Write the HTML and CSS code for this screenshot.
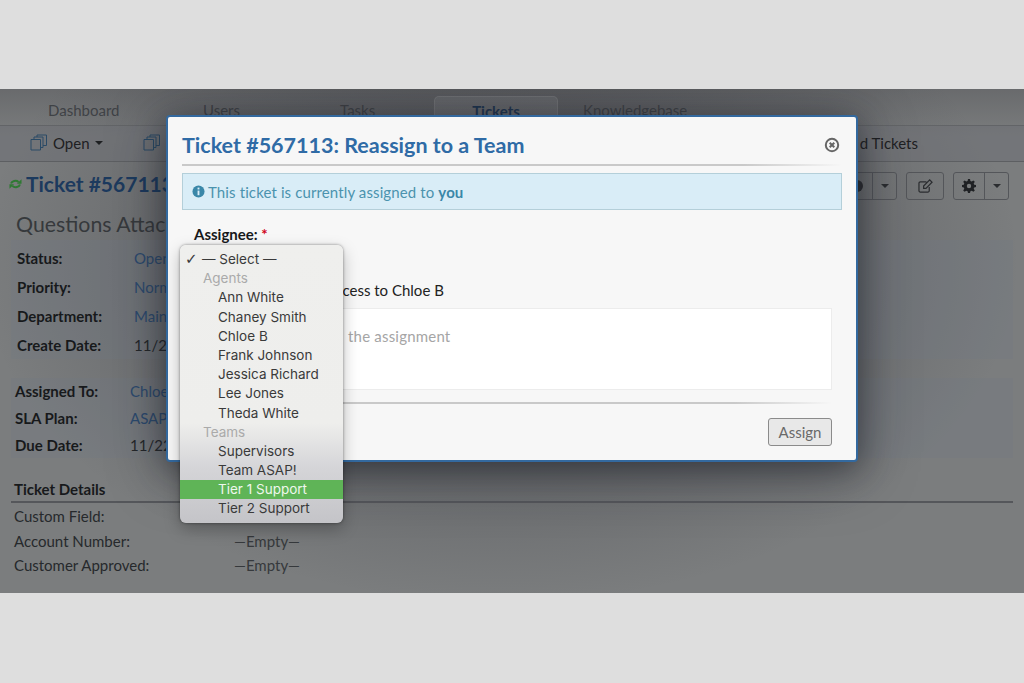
FILE: index.html
```html
<!DOCTYPE html>
<html lang="en">
<head>
<meta charset="utf-8">
<title>Ticket #567113</title>
<link rel="stylesheet" href="styles.css">
</head>
<body>
<main class="frame">
  <nav class="tabs">
    <span class="tab t-dash">Dashboard</span>
    <span class="tab t-users">Users</span>
    <span class="tab t-tasks">Tasks</span>
    <span class="tab t-tickets">Tickets</span>
    <span class="tab t-kb">Knowledgebase</span>
  </nav>
  <div class="subnav">
    <span class="sub-open">
      <svg class="files" viewBox="0 0 18 17"><path d="M1 5.500h9.500v10.500H1zM4 5.500V3h9v10.500h-2.500M7 3V1h9.500v10.500H13"/></svg>
      Open <i class="caret"></i>
    </span>
    <svg class="files files-2" viewBox="0 0 18 17"><path d="M1 5.500h9.500v10.500H1zM4 5.500V3h9v10.500h-2.500M7 3V1h9.500v10.500H13"/></svg>
    <span class="sub-right">d Tickets</span>
  </div>
  <div class="content">
    <div class="title-row">
      <h1 class="ticket-title">
        <svg class="refresh" viewBox="0 0 14 12"><path class="arc" d="M2.200 5.500C3 2.800 7.500 1.500 10.300 3.800M11.800 6.500C11 9.200 6.500 10.500 3.700 8.200"/><path class="head" d="M13.500 .8V5.800H8.500zM.5 11.200V6.200H5.500z"/></svg>
        Ticket #567113
      </h1>
      <div class="actions">
        <span class="btn-group"><span class="btn-cell cell-clip"><svg class="i-print" viewBox="0 0 14 14"><circle cx="7" cy="7" r="6"/></svg></span><span class="btn-cell"><i class="caret"></i></span></span>
        <span class="btn-group"><span class="btn-cell cell-wide"><svg class="i-edit" viewBox="0 0 16 15"><path d="M12 8.500V12.500a1.500 1.500 0 0 1-1.500 1.500H2.500A1.500 1.500 0 0 1 1 12.500v-8A1.500 1.500 0 0 1 2.500 3H9M6 7.500 12.500 1 15 3.500 8.500 10H6z"/></svg></span></span>
        <span class="btn-group"><span class="btn-cell cell-gear"><svg class="i-gear" viewBox="0 0 14 14"><path fill-rule="evenodd" d="M6 0h2l.4 2 1.300.5L11.400 1.400 12.800 2.800 11.700 4.400 12.200 5.700 14 6v2l-1.800.4-.5 1.300 1.100 1.700-1.400 1.400-1.700-1.100-1.300.5L8 14H6l-.4-1.800-1.300-.5-1.700 1.100-1.400-1.400 1.100-1.700-.5-1.300L0 8V6l1.800-.3.5-1.300L1.200 2.800 2.600 1.400 4.300 2.500 5.600 2zM7 4.800a2.200 2.200 0 1 0 0 4.400 2.200 2.200 0 0 0 0-4.400z"/></svg></span><span class="btn-cell"><i class="caret"></i></span></span>
      </div>
    </div>
    <h2 class="subject">Questions Attached</h2>
    <dl class="info info-a">
      <dt>Status:</dt><dd class="link">Open</dd>
      <dt>Priority:</dt><dd class="link">Normal</dd>
      <dt>Department:</dt><dd class="link">Maintenance</dd>
      <dt>Create Date:</dt><dd>11/21/19</dd>
    </dl>
    <dl class="info info-b">
      <dt>Assigned To:</dt><dd class="link">Chloe B</dd>
      <dt>SLA Plan:</dt><dd class="link">ASAP</dd>
      <dt>Due Date:</dt><dd>11/22/19</dd>
    </dl>
    <h3 class="details-head">Ticket Details</h3>
    <dl class="details">
      <dt>Custom Field:</dt><dd></dd>
      <dt>Account Number:</dt><dd>&mdash;Empty&mdash;</dd>
      <dt>Customer Approved:</dt><dd>&mdash;Empty&mdash;</dd>
    </dl>
  </div>

  <section class="modal">
    <header class="modal-head">
      <h2>Ticket #567113: Reassign to a Team</h2>
      <svg class="close" viewBox="0 0 16 16"><circle cx="8" cy="8" r="6.200"/><path d="M5.700 5.700l4.600 4.600M10.300 5.700l-4.600 4.600"/></svg>
    </header>
    <hr class="rule">
    <p class="notice">
      <svg class="info-icon" viewBox="0 0 14 14"><circle cx="7" cy="7" r="6.500"/><rect class="glyph" x="6" y="2.800" width="2" height="2"/><rect class="glyph" x="6" y="6" width="2" height="5"/></svg>
      <span>This ticket is currently assigned to <b>you</b></span>
    </p>
    <label class="assignee">Assignee: <span class="req">*</span></label>
    <div class="select-stub"></div>
    <p class="access">access to Chloe B</p>
    <div class="comment"><span class="comment-text">the assignment</span></div>
    <hr class="rule rule-low">
    <div class="modal-foot"><button class="assign" type="button">Assign</button></div>
  </section>

  <ul class="menu">
    <li class="opt opt-check"><span class="check">&#10003;</span>&mdash; Select &mdash;</li>
    <li class="group">Agents</li>
    <li class="opt">Ann White</li>
    <li class="opt">Chaney Smith</li>
    <li class="opt">Chloe B</li>
    <li class="opt">Frank Johnson</li>
    <li class="opt">Jessica Richard</li>
    <li class="opt">Lee Jones</li>
    <li class="opt">Theda White</li>
    <li class="group">Teams</li>
    <li class="opt">Supervisors</li>
    <li class="opt">Team ASAP!</li>
    <li class="opt active">Tier 1 Support</li>
    <li class="opt">Tier 2 Support</li>
  </ul>
</main>
</body>
</html>
```

FILE: styles.css
```css
* { box-sizing: border-box; }
html, body { margin: 0; height: 683px; overflow: hidden; }
body {
  background: #dedede;
  font-family: Lato, "Open Sans", sans-serif;
  padding-top: 89px;
  color: #24272a;
}
.frame {
  position: relative;
  height: 504px;
  overflow: hidden;
  background:
    linear-gradient(180deg, rgba(40,40,46,.22), rgba(40,40,46,0) 48px),
    radial-gradient(ellipse 520px 340px at 500px 175px, rgba(40,42,50,.55), rgba(40,42,50,0) 100%),
    #7b7d7e;
}

/* Tabs */
.tabs { height: 37px; position: relative; border-bottom: 1px solid #626467; }
.tab { position: absolute; top: 13px; font-size: 15px; color: #3f4246; line-height: 17px; }
.t-dash { left: 48px; }
.t-users { left: 203px; }
.t-tasks { left: 340px; }
.t-tickets { left: 434px; top: 7px; width: 124px; height: 31px; padding-top: 6px; text-align: center; font-weight: 700; color: #1f3550; background: rgba(255,255,255,.07); border: 1px solid rgba(255,255,255,.08); border-radius: 5px 5px 0 0; }
.t-kb { left: 583px; }

/* Sub nav */
.subnav {
  height: 36px;
  display: flex;
  align-items: center;
  font-size: 15px;
  color: #1e2022;
  border-bottom: 1px solid #5d5f62;
  background: rgba(110,112,116,.55);
  padding: 0 0 2px 30px;
}
.sub-open { display: flex; align-items: center; gap: 5px; }
.files { width: 18px; height: 17px; fill: none; stroke: #2a4a66; stroke-width: 1; }
.files-2 { margin-left: 40px; }
.sub-right { margin-left: auto; margin-right: 106px; }
.caret { display: inline-block; width: 0; height: 0; border: 4px solid transparent; border-top-color: currentColor; border-bottom-width: 0; }

/* Ticket content */
.content { padding: 0 11px; }
.title-row { height: 48px; display: flex; justify-content: space-between; align-items: center; padding-bottom: 5px; }
.ticket-title { margin: 0 0 0 -2px; display: flex; align-items: center; gap: 4px; font-size: 21px; font-weight: 700; line-height: 30px; color: #1c3a5e; }
.refresh { width: 13px; height: 12px; }
.arc { fill: none; stroke: #2f7a33; stroke-width: 2.200; }
.head { fill: #2f7a33; }
.actions { display: flex; gap: 9px; margin: 4px 4px 0 0; }
.btn-group { display: flex; height: 28px; border: 1px solid #54565a; border-radius: 3px; color: #2b2d30; }
.btn-cell { display: flex; align-items: center; justify-content: center; width: 24px; }
.btn-cell + .btn-cell { border-left: 1px solid #54565a; }
.cell-clip { width: 30px; }
.cell-wide { width: 36px; }
.cell-gear { width: 30px; }
.i-print { width: 14px; height: 14px; fill: #2b2d30; }
.i-edit { width: 15px; height: 14px; fill: none; stroke: #2b2d30; stroke-width: 1.300; }
.i-gear { width: 14px; height: 14px; fill: #1f2124; }
.subject { margin: -1px 0 0 5px; font-size: 21.300px; font-weight: 400; line-height: 30px; color: #36393c; }
.info { display: grid; margin: 0; background: rgba(110,120,130,.25); }
.info dt { font-weight: 700; color: #17191b; }
.info dd { margin: 0; color: #24272a; }
.info .link { color: #2c4a6e; }
.info-a { grid-template-columns: 117px 1fr; grid-auto-rows: 29px; align-items: center; font-size: 15px; padding: 3px 0 0 6px; height: 119px; margin-top: 1px; }
.info-b { grid-template-columns: 115px 1fr; grid-auto-rows: 26.700px; align-items: center; font-size: 15px; padding: 0 0 0 4px; margin-top: 19px; height: 80px; }
.details-head { margin: 22px 0 0; padding: 0 0 3px 3px; font-size: 15px; font-weight: 700; line-height: 18px; color: #17191b; border-bottom: 2px solid #55575b; }
.details { margin: 1px 0 0 3px; display: grid; grid-template-columns: 220px 1fr; grid-template-rows: 24px 25px 24px; align-items: center; font-size: 15px; color: #26292c; }
.details dd { margin: 0; color: #36393c; }

/* Modal */
.modal {
  position: absolute;
  left: 166px;
  top: 26px;
  width: 692px;
  height: 347px;
  background: #f7f7f7;
  border: 2px solid #33699f;
  border-radius: 4px;
  padding: 0 14px;
  box-shadow: 0 6px 30px rgba(25,27,35,.45), 0 10px 60px rgba(25,27,35,.4);
}
.modal-head { height: 45px; display: flex; align-items: center; justify-content: space-between; padding: 10px 2px 0 0; }
.modal-head h2 { margin: 0; font-size: 21.500px; font-weight: 700; color: #2f6ba6; }
.close { width: 16px; height: 16px; fill: none; stroke: #666; stroke-width: 2; }
.rule { border: 0; height: 2px; margin: 2px 0 7px; background: linear-gradient(90deg, #c9c9c9, #c9c9c9 85%, rgba(201,201,201,0)); }
.notice {
  margin: 0;
  height: 37px;
  display: flex;
  align-items: center;
  gap: 3px;
  font-size: 15px;
  letter-spacing: .12px;
  color: #4b93ae;
  background: #d9edf7;
  border: 1px solid #b4cfd9;
  padding-left: 9px;
  width: 660px;
}
.notice b { color: #3a87a8; }
.info-icon { width: 13px; height: 13px; fill: #3a87a8; }
.glyph { fill: #d9edf7; }
.assignee { display: block; margin: 15px 0 0 12px; font-size: 15px; font-weight: 700; line-height: 18px; color: #17191b; }
.req { color: #d0021b; }
.select-stub { height: 3px; width: 134px; margin: 3px 0 0 10px; background: #6fa560; }
.access { margin: 32px 0 0 146px; font-size: 15px; line-height: 18px; color: #222; }
.comment {
  margin: 9px 0 0;
  width: 650px;
  height: 82px;
  background: #fff;
  border: 1px solid #ececec;
  padding: 18px 0 0 165px;
  font-size: 15px;
  line-height: 18px;
  color: #a5a5a5;
  letter-spacing: .2px;
}
.rule-low { margin: 12px 0 0; width: 650px; }
.modal-foot { display: flex; justify-content: flex-end; width: 650px; padding-top: 14px; }
.assign {
  width: 64px;
  height: 28px;
  font: 15px Lato, sans-serif;
  color: #6a6a6a;
  background: #e8e8e8;
  border: 1px solid #8b8b8b;
  border-radius: 3px;
  padding: 0;
}

/* Native select popup */
.menu {
  position: absolute;
  left: 180px;
  top: 156px;
  width: 163px;
  height: 278px;
  margin: 0;
  padding: 5px 0 0;
  list-style: none;
  border-radius: 6px;
  background: linear-gradient(180deg, #efefed 0%, #eeeeec 64%, #d5d5d8 80%, #c4c4c8 100%);
  box-shadow: 0 0 3px rgba(0,0,0,.45), 0 6px 16px rgba(0,0,0,.25);
  font-family: Inter, Roboto, sans-serif;
  font-size: 13.500px;
  color: #3a3a3a;
}
.menu li { height: 19.200px; line-height: 19.200px; white-space: nowrap; }
.opt { padding-left: 38px; }
.opt-check { padding-left: 22px; position: relative; }
.check { position: absolute; left: 5px; top: 0; font-family: "DejaVu Sans", sans-serif; font-size: 15px; }
.group { padding-left: 23px; color: #aaaaaa; }
.menu .active { background: #5fb457; color: #eef7ec; }
```
